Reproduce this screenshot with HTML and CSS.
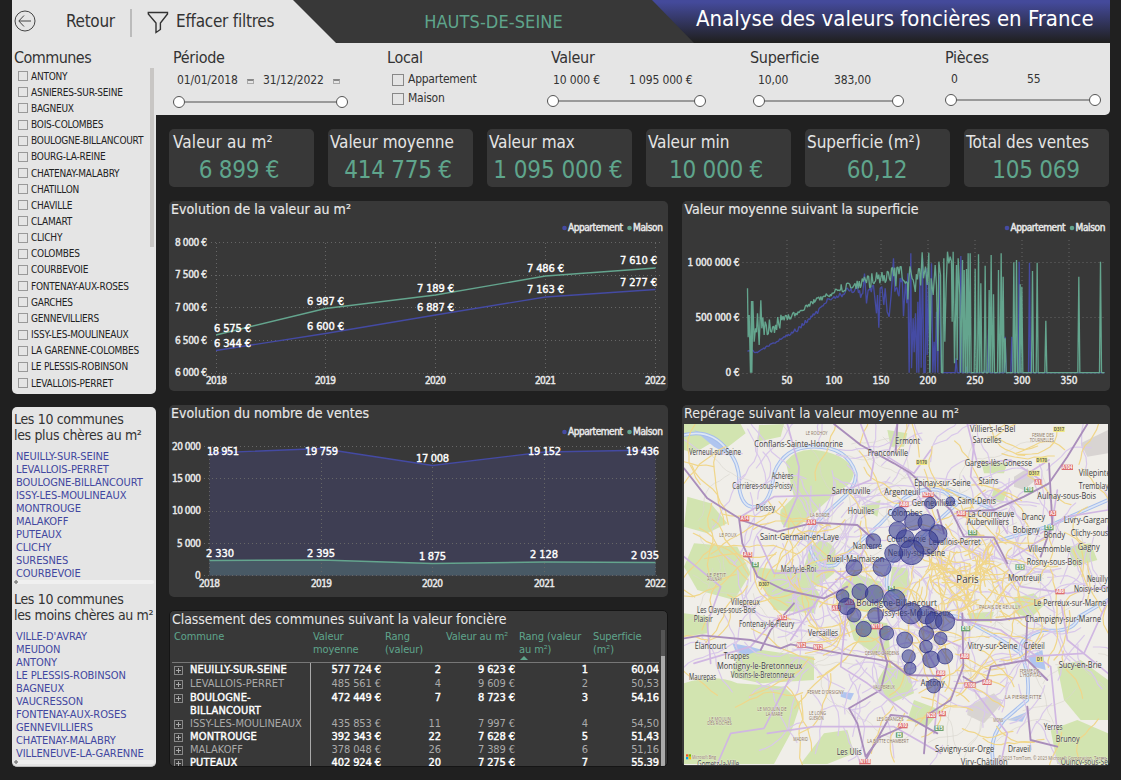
FILE: index.html
```html
<!DOCTYPE html>
<html lang="fr">
<head>
<meta charset="utf-8">
<title>Analyse des valeurs foncières en France</title>
<link rel="stylesheet" href="styles.css">
</head>
<body>
<header class="top">
  <div class="tools">
    <svg class="back" viewBox="0 0 22 22"><circle cx="11" cy="11" r="10"/><path d="M5 11H17M10 5.5L4.8 11L10 16.5"/></svg>
    <span class="back-label">Retour</span>
    <i class="divider"></i>
    <svg class="funnel" viewBox="0 0 22 23"><path d="M1.3 1.5H20.5V3L13.4 12V18.500L9 21.500V12L1.300 3Z"/></svg>
    <span class="clear-label">Effacer filtres</span>
  </div>
  <div class="dept"><span>HAUTS-DE-SEINE</span></div>
  <h1><span>Analyse des valeurs foncières en France</span></h1>
</header>
<div class="body">
  <aside>
    <section class="communes">
      <h2>Communes</h2>
      <div class="scroller">
      <ul>
        <li>ANTONY</li><li>ASNIERES-SUR-SEINE</li><li>BAGNEUX</li><li>BOIS-COLOMBES</li><li>BOULOGNE-BILLANCOURT</li><li>BOURG-LA-REINE</li><li>CHATENAY-MALABRY</li><li>CHATILLON</li><li>CHAVILLE</li><li>CLAMART</li><li>CLICHY</li><li>COLOMBES</li><li>COURBEVOIE</li><li>FONTENAY-AUX-ROSES</li><li>GARCHES</li><li>GENNEVILLIERS</li><li>ISSY-LES-MOULINEAUX</li><li>LA GARENNE-COLOMBES</li><li>LE PLESSIS-ROBINSON</li><li>LEVALLOIS-PERRET</li>
      </ul>
      <i class="thumb"></i>
      </div>
    </section>
    <section class="tops">
      <h2>Les 10 communes<br>les plus chères au m²</h2>
      <ul><li>NEUILLY-SUR-SEINE</li><li>LEVALLOIS-PERRET</li><li>BOULOGNE-BILLANCOURT</li><li>ISSY-LES-MOULINEAUX</li><li>MONTROUGE</li><li>MALAKOFF</li><li>PUTEAUX</li><li>CLICHY</li><li>SURESNES</li><li>COURBEVOIE</li></ul>
      <div class="hbar"></div>
      <h2>Les 10 communes<br>les moins chères au m²</h2>
      <ul><li>VILLE-D'AVRAY</li><li>MEUDON</li><li>ANTONY</li><li>LE PLESSIS-ROBINSON</li><li>BAGNEUX</li><li>VAUCRESSON</li><li>FONTENAY-AUX-ROSES</li><li>GENNEVILLIERS</li><li>CHATENAY-MALABRY</li><li>VILLENEUVE-LA-GARENNE</li></ul>
      <div class="hbar"></div>
    </section>
  </aside>
  <main>
    <section class="filters">
      <div class="filter periode"><h3>Période</h3>
        <div class="vals"><span>01/01/2018</span><i class="cal"></i><span>31/12/2022</span><i class="cal"></i></div>
        <div class="slider"><b></b><b></b></div></div>
      <div class="filter local"><h3>Local</h3><label>Appartement</label><label>Maison</label></div>
      <div class="filter valeur"><h3>Valeur</h3><div class="vals"><span>10 000 €</span><span>1 095 000 €</span></div><div class="slider"><b></b><b></b></div></div>
      <div class="filter surface"><h3>Superficie</h3><div class="vals"><span>10,00</span><span>383,00</span></div><div class="slider"><b></b><b></b></div></div>
      <div class="filter pieces"><h3>Pièces</h3><div class="vals"><span>0</span><span>55</span></div><div class="slider"><b></b><b></b></div></div>
    </section>
    <section class="kpis">
      <div><h3>Valeur au m²</h3><p>6 899 €</p></div>
      <div><h3>Valeur moyenne</h3><p>414 775 €</p></div>
      <div><h3>Valeur max</h3><p>1 095 000 €</p></div>
      <div><h3>Valeur min</h3><p>10 000 €</p></div>
      <div><h3>Superficie (m²)</h3><p>60,12</p></div>
      <div><h3>Total des ventes</h3><p>105 069</p></div>
    </section>
    <section class="panels">
      <div class="col">
        <svg class="card chart" width="499" height="190" viewBox="169 201 499 190">
          <text class="ttl" x="171" y="214" textLength="180">Evolution de la valeur au m²</text>
          <circle class="fa" cx="564.500" cy="228" r="2.300"/><text class="leg" x="568" y="231.300" textLength="55">Appartement</text>
          <circle class="fm" cx="629.500" cy="228" r="2.300"/><text class="leg" x="633" y="231.300" textLength="30">Maison</text>
          <path class="grid" d="M211 242.500H660M211 275.500H660M211 307.500H660M211 340.500H660M211 373.500H660M216.500 243V373M325.500 243V373M435.500 243V373M545.500 243V373M655.500 243V373"/>
          <text class="ax" x="175" y="246" textLength="32">8 000 €</text><text class="ax" x="175" y="278" textLength="32">7 500 €</text><text class="ax" x="175" y="311" textLength="32">7 000 €</text><text class="ax" x="175" y="344" textLength="32">6 500 €</text><text class="ax" x="175" y="376" textLength="32">6 000 €</text>
          <text class="ax" x="206" y="384" textLength="21">2018</text><text class="ax" x="315" y="384" textLength="21">2019</text><text class="ax" x="425" y="384" textLength="21">2020</text><text class="ax" x="535" y="384" textLength="21">2021</text><text class="ax" x="645" y="384" textLength="21">2022</text>
          <path class="la" d="M216 350.500L325.500 333.500L435.500 315L545.500 297L655.500 289.500"/>
          <path class="lm" d="M216 335L325.500 308.500L435.500 295L545.500 276L655.500 268"/>
          <text class="dl" x="214" y="332" textLength="37">6 575 €</text><text class="dl" x="307" y="305" textLength="37">6 987 €</text><text class="dl" x="417" y="292" textLength="37">7 189 €</text><text class="dl" x="527" y="272" textLength="37">7 486 €</text><text class="dl" x="620" y="264" textLength="37">7 610 €</text>
          <text class="dl" x="214" y="347" textLength="37">6 344 €</text><text class="dl" x="307" y="330" textLength="37">6 600 €</text><text class="dl" x="417" y="311" textLength="37">6 887 €</text><text class="dl" x="527" y="293" textLength="37">7 163 €</text><text class="dl" x="620" y="286" textLength="37">7 277 €</text>
        </svg>
        <svg class="card chart" width="499" height="192" viewBox="169 405 499 192">
          <text class="ttl" x="171" y="418" textLength="198">Evolution du nombre de ventes</text>
          <circle class="fa" cx="564.500" cy="432" r="2.300"/><text class="leg" x="568" y="435.300" textLength="55">Appartement</text>
          <circle class="fm" cx="629.500" cy="432" r="2.300"/><text class="leg" x="633" y="435.300" textLength="30">Maison</text>
          <path class="aa" d="M209.500 453L321.500 448.500L432.500 465.500L544.500 452L655.500 450V575.500H209.500Z"/>
          <path class="am" d="M209.500 560.500L321.500 560L432.500 563.500L544.500 562L655.500 562.500V575.500H209.500Z"/>
          <path class="grid" d="M204 446.500H659M204 478.500H659M204 511.500H659M204 543.500H659M204 575.500H659M209.500 447V575M321.500 447V575M432.500 447V575M544.500 447V575M655.500 447V575"/>
          <text class="ax" x="172" y="450" textLength="29">20 000</text><text class="ax" x="172" y="482" textLength="29">15 000</text><text class="ax" x="172" y="514" textLength="29">10 000</text><text class="ax" x="177" y="547" textLength="24">5 000</text><text class="ax" x="195" y="579">0</text>
          <text class="ax" x="199" y="587" textLength="21">2018</text><text class="ax" x="311" y="587" textLength="21">2019</text><text class="ax" x="422" y="587" textLength="21">2020</text><text class="ax" x="534" y="587" textLength="21">2021</text><text class="ax" x="645" y="587" textLength="21">2022</text>
          <path class="la" d="M209.500 453L321.500 448.500L432.500 465.500L544.500 452L655.500 450"/>
          <path class="lm" d="M209.500 560.500L321.500 560L432.500 563.500L544.500 562L655.500 562.500"/>
          <text class="dl" x="207" y="455" textLength="32">18 951</text><text class="dl" x="305" y="455" textLength="33">19 759</text><text class="dl" x="416" y="462" textLength="33">17 008</text><text class="dl" x="528" y="455" textLength="33">19 152</text><text class="dl" x="626" y="455" textLength="33">19 436</text>
          <text class="dl" x="206" y="557" textLength="28">2 330</text><text class="dl" x="307" y="557" textLength="28">2 395</text><text class="dl" x="419" y="560" textLength="27">1 875</text><text class="dl" x="530" y="558" textLength="28">2 128</text><text class="dl" x="631" y="559" textLength="28">2 035</text>
        </svg>
        <div class="card ranking">
          <h3>Classement des communes suivant la valeur foncière</h3>
          <div class="thead"><span>Commune</span><span>Valeur<br>moyenne</span><span>Rang<br>(valeur)</span><span>Valeur au m²</span><span class="sorted">Rang (valeur<br>au m²)</span><span>Superficie<br>(m²)</span></div>
          <div class="rows">
            <div class="row strong"><span><i></i>NEUILLY-SUR-SEINE</span><span>577 724 €</span><span>2</span><span>9 623 €</span><span>1</span><span>60,04</span></div>
            <div class="row"><span><i></i>LEVALLOIS-PERRET</span><span>485 561 €</span><span>4</span><span>9 609 €</span><span>2</span><span>50,53</span></div>
            <div class="row strong tall"><span><i></i>BOULOGNE-<br>BILLANCOURT</span><span>472 449 €</span><span>7</span><span>8 723 €</span><span>3</span><span>54,16</span></div>
            <div class="row"><span><i></i>ISSY-LES-MOULINEAUX</span><span>435 853 €</span><span>11</span><span>7 997 €</span><span>4</span><span>54,50</span></div>
            <div class="row strong"><span><i></i>MONTROUGE</span><span>392 343 €</span><span>22</span><span>7 628 €</span><span>5</span><span>51,43</span></div>
            <div class="row"><span><i></i>MALAKOFF</span><span>378 048 €</span><span>26</span><span>7 389 €</span><span>6</span><span>51,16</span></div>
            <div class="row strong"><span><i></i>PUTEAUX</span><span>402 924 €</span><span>20</span><span>7 275 €</span><span>7</span><span>55,39</span></div>
          </div>
          <div class="vscroll"></div>
        </div>
      </div>
      <div class="col">
        <svg class="card chart" width="428" height="190" viewBox="681.500 201 428 190">
          <text class="ttl" x="684" y="214" textLength="234">Valeur moyenne suivant la superficie</text>
          <circle class="fa" cx="1006.500" cy="228" r="2.300"/><text class="leg" x="1010" y="231.300" textLength="55">Appartement</text>
          <circle class="fm" cx="1071.500" cy="228" r="2.300"/><text class="leg" x="1075" y="231.300" textLength="30">Maison</text>
          <path class="grid" d="M742 262.500H1105M742 317.500H1105M742 373.500H1105M786.500 240V373M833.500 240V373M880.500 240V373M927.500 240V373M974.500 240V373M1021.500 240V373M1068.500 240V373"/>
          <text class="ax" x="687" y="266" textLength="52">1 000 000 €</text><text class="ax" x="695" y="321" textLength="44">500 000 €</text><text class="ax" x="725" y="376" textLength="14">0 €</text>
          <text class="ax" x="781" y="384" textLength="11">50</text><text class="ax" x="825" y="384" textLength="17">100</text><text class="ax" x="872" y="384" textLength="17">150</text><text class="ax" x="919" y="384" textLength="17">200</text><text class="ax" x="966" y="384" textLength="17">250</text><text class="ax" x="1013" y="384" textLength="17">300</text><text class="ax" x="1060" y="384" textLength="17">350</text>
          <g transform="translate(674 195) scale(.33333)"><polyline id="app" class="sa"/><polyline id="mai" class="sm"/></g>
        </svg>
        <div class="card mapcard">
          <h3>Repérage suivant la valeur moyenne au m²</h3>
          <svg class="map" width="424" height="341" viewBox="684 424 424 341"><g id="map" transform="translate(674 400) scale(.33333)"></g></svg>
        </div>
      </div>
    </section>
  </main>
</div>
<script src="script.js"></script>
</body>
</html>
```
FILE: styles.css
```css
*,*::before{box-sizing:border-box;margin:0;padding:0}
body{width:1121px;height:780px;overflow:hidden;background:#202020;padding-left:12px;font-family:"DejaVu Sans Condensed","DejaVu Sans",sans-serif;font-stretch:condensed;color:#333;font-size:11px}
h1,h2,h3{font-weight:400}
ul{list-style:none}
.top{display:flex;width:1098px;height:43px;background:linear-gradient(#444a9b 5%,#202020 98%)}
.tools{width:324px;background:#e5e5e5;clip-path:polygon(0 0,281px 0,100% 100%,0 100%);display:flex;align-items:center;font-size:17px;position:relative;z-index:1;white-space:nowrap}
.back{width:22px;height:22px;margin-left:2px;margin-bottom:2px;fill:none;stroke:#444;stroke-width:1}
.back-label{margin-left:30px;width:64px;margin-bottom:2px;letter-spacing:-.3px}
.divider{width:2px;height:28px;background:#bbb;margin-top:3px}
.funnel{width:22px;height:23px;margin-left:15px;margin-top:2px;fill:none;stroke:#333;stroke-width:1.4}
.clear-label{margin-left:7px;margin-bottom:2px;letter-spacing:-.25px}
.dept{margin-left:-43px;width:401px;background:#383838;clip-path:polygon(0 0,359px 0,100% 100%,0 100%);display:flex;align-items:center;justify-content:center;color:#5fa58c;font-size:18px;letter-spacing:.1px}
.top h1{flex:1;color:#fff;font-size:22px;letter-spacing:0;white-space:nowrap;padding:6px 0 0 2px}
.body{display:flex}
aside{width:144px}
.communes{height:351px;background:#e5e5e5;border-radius:0 0 5px 5px;padding:6px 2px 0;margin-bottom:13px}
.communes h2{font-size:16px;line-height:18px;letter-spacing:-.55px}
.scroller{display:flex;justify-content:space-between;padding-top:1px}
.communes ul{font-size:10px;letter-spacing:-.22px;color:#222;white-space:nowrap}
.communes li{height:16.16px;line-height:17px;display:flex;align-items:center;padding-left:4px}
.communes li::before{content:"";width:10px;height:10px;border:1px solid #999;margin-right:3px;flex:none}
.thumb{width:4px;height:179px;background:#c8c6c4;flex:none}
.tops{height:360px;background:#e5e5e5;border-radius:5px;padding:4px 2px 0;border-bottom:1px solid #bbb}
.tops h2{font-size:14px;line-height:16px;letter-spacing:-.34px;white-space:nowrap}
.tops ul{padding:7px 0 0 2px;color:#4247a0;font-size:11px;letter-spacing:-.08px;white-space:nowrap}
.tops li{height:13px;line-height:13px}
.hbar{height:4px;background:radial-gradient(circle at 2px 2px,#888 1.5px,#f0f0f0 2px);margin:0 0 7px;border-radius:2px}
main{width:954px}
.filters{height:72px;background:#e5e5e5;border-radius:0 0 5px 0;padding:6px 0 0 17px;display:grid;grid-template-columns:214px 164px 199px 195px 165px;color:#333}
.filter h3{font-size:16px;line-height:18px;height:23px;letter-spacing:-.3px}
.vals{display:flex;height:16px;line-height:16px;font-size:12px;letter-spacing:-.15px;align-items:center;white-space:nowrap}
.periode .vals{padding-left:4px}
.periode .vals span{width:70px}
.cal{width:7px;height:5px;border:1px solid #aaa;border-top:2px solid #888;margin:2px 9px 0 0}
.local label{display:flex;align-items:center;height:19px;padding-left:5px;font-size:12px;letter-spacing:-.25px;line-height:17px;margin-top:-2px;margin-bottom:2px}
.local label::before{content:"";width:12px;height:12px;border:1px solid #888;margin-right:4px}
.valeur .vals{padding-left:2px}.valeur .vals span:first-child,.surface .vals span:first-child,.pieces .vals span:first-child{width:76px}
.surface .vals{padding-left:8px}.pieces .vals{padding-left:6px;margin-top:-1px}
.slider{display:flex;justify-content:space-between;align-items:center;height:12px;margin-top:7px;background:linear-gradient(#999,#999) 0 50%/100% 2px no-repeat}
.slider b{width:12px;height:12px;border:1px solid #555;border-radius:50%;background:#fff}
.periode .slider{width:175px;margin-top:8px}
.valeur .slider{width:159px;margin-left:-4px}
.surface .slider{width:151px;margin-left:3px}
.pieces .slider{width:156px}
.kpis{display:grid;grid-template-columns:repeat(6,145px);justify-content:space-between;margin:14px 1px 14px 13px}
.kpis div{height:58px;background:#383838;border-radius:5px;padding:4px 2px}
.kpis h3{color:#e5e5e5;font-size:17px;line-height:19px;letter-spacing:-.05px;white-space:nowrap}
.kpis div:first-child h3{padding-left:2px;letter-spacing:.15px}
.kpis p{text-align:center;color:#5fa58c;font-size:24px;line-height:30px;letter-spacing:-.25px;margin-top:3px;padding-right:5px;white-space:nowrap}
.kpis div:nth-child(3) p{letter-spacing:-.1px;padding-right:3px}
.kpis div:nth-child(n+5) p{padding-right:1px}
.panels{display:flex;gap:13.500px;margin-left:13px}
.col{display:flex;flex-direction:column;gap:14px}
.card{background:#383838;border-radius:5px;display:block}
.chart text{fill:#e8e8e8;font-size:11px}
.chart .ttl{font-size:14px;stroke:#e8e8e8;stroke-width:.15}
.chart .leg,.chart .ax{font-size:10px;stroke:#e8e8e8;stroke-width:.45}
.chart .dl{fill:#fff;stroke:#fff;stroke-width:.4}
.grid{stroke:#666;stroke-dasharray:1 3;fill:none}
.fa{fill:#454ba3}.fm{fill:#64a58e}
.la,.lm{fill:none;stroke:#444aa3;stroke-width:1.4}.lm{stroke:#64a58e}
.aa{fill:#3e3e53}.am{fill:#485965}
.sa,.sm{fill:none;stroke:#454ba3;stroke-width:4;stroke-linejoin:bevel}.sm{stroke:#64a58e}
.ranking{position:relative;width:499px;height:157px;margin-top:-1px;border:1px solid #151515;padding:1px 0 0 2px;overflow:hidden;color:#aaa}
.ranking h3{font-size:14px;line-height:16px;margin-top:-1px;margin-bottom:1px;color:#e8e8e8;letter-spacing:-.06px;white-space:nowrap}
.thead{display:grid;grid-template-columns:139px 72px 61px 73px 74px 66px;color:#5fa58c;font-size:11px;line-height:13px;height:34px;padding:2px 0 0 2px;letter-spacing:-.1px;white-space:nowrap}
.sorted{position:relative}
.sorted::after{content:"";position:absolute;left:1px;top:26px;border:4px solid transparent;border-top:0;border-bottom:4px solid #5fa58c}
.rows{width:487px;border-top:1px solid #777;background:linear-gradient(#aaa,#aaa) 138px 0/1px 100% no-repeat}
.row{display:grid;grid-template-columns:138px 71px 60px 74px 73px 71px;height:13px;line-height:13px;text-align:right;letter-spacing:-.1px;white-space:nowrap}
.row:nth-child(-n+2){height:14px}.row.tall{height:26px}
.row span:first-child{text-align:left;padding-left:18px;position:relative;letter-spacing:0}
.row.strong span:first-child{letter-spacing:.15px}
.row i{position:absolute;left:2px;top:3px;width:9px;height:9px;border:1px solid #888;background:linear-gradient(#aaa,#aaa) 50% 50%/5px 1px no-repeat,linear-gradient(#aaa,#aaa) 50% 50%/1px 5px no-repeat}
.row.strong{color:#fff;-webkit-text-stroke:.4px #fff}
.vscroll{position:absolute;right:2px;top:19px;width:4px;height:136px;background:linear-gradient(#555 26px,#aaa 26px)}
.mapcard{width:428px;height:361px;padding-left:2.500px}
.mapcard h3{color:#e8e8e8;font-size:14px;line-height:16px;height:19px;letter-spacing:.05px}
.map{display:block;background:#f0eee9;font-family:"Open Sans","Noto Sans",sans-serif;font-stretch:normal}
.map path{fill:none;stroke-linecap:round;stroke-linejoin:round}
.map .wood{fill:#d2e4b0}.map .lake{fill:#b0c5ef}.map .airport{fill:#d8d4d2}
.map .river{stroke:#a6beec;stroke-width:11}.map .rivercore{stroke:#dde7f5;stroke-width:5}
.map .hwy{stroke:#a98dbb;stroke-width:5.5}.map .road{stroke:#d0b7e2;stroke-width:5}.map .street{stroke:#f0d68a;stroke-width:3.6}.map .lane{stroke:#d9c8ea;stroke-width:3.5}.map .path{stroke:#d9d6cf;stroke-width:2}
.map text{fill:#3c3c3c;stroke:#f2f0ec;stroke-width:1.5;paint-order:stroke;font-size:25px}
.map .place{fill:#8a7460;font-size:15px;stroke-width:1}
.map .badge{fill:#fff;stroke:none;font-size:13px;font-weight:bold}
.map .bubble{fill:#363d93;fill-opacity:.58;stroke:#282b83;stroke-width:2}
```
FILE: script.js
```js
const NS = 'http://www.w3.org/2000/svg';
let seed = 17;
const rnd = () => (seed = (seed * 16807) % 2147483647) / 2147483647;

// Walks along [x, y, amplitude] anchors, adding noise every step.
function noisy(anchors, step) {
  const out = [];
  for (let i = 0; i < anchors.length - 1; i++) {
    const [x0, y0, a0] = anchors[i], [x1, y1, a1] = anchors[i + 1];
    for (let x = x0; x < x1; x += step) {
      const t = (x - x0) / (x1 - x0);
      out.push([x, y0 + (y1 - y0) * t + (rnd() * 2 - 1) * (a0 + (a1 - a0) * t)]);
    }
  }
  return out;
}
const plot = (id, pts) => document.getElementById(id).setAttribute('points', pts.map(p => p[0].toFixed(1) + ',' + Math.min(533, p[1]).toFixed(1)).join(' '));
const peaks = list => list.flatMap(([x, y, w = 3]) => [[x - w, 533], [x, y], [x + w, 533]]);

plot('mai', [[219,280],[221,427],[224,360],[228,533],[231,318],[232,533],[235,318],[239,440],[243,400],[246,412],[249,355],[254,450],[259,316],[262,400],[265,368],[269,420],
  ...noisy([[272,405,25],[300,390,30],[345,367,9],[380,345,7],[420,320,9],[470,298,9],[500,280,12],[560,265,14],[600,255,26],[680,243,34],[700,265,50],[740,235,45]], 3.2),
  [743,172],[747,250],[753,215],[758,270],[763,173],[766,533],[770,250],[776,300],[782,210],[786,270],[790,468],[793,200],[798,240],[801,533],[805,533],[808,190],[811,440],[815,270],[819,170],[823,205],[827,185],[831,200],[833,380],[836,170],[840,505],[846,210],[848,495],[851,190],[856,300],[858,533],[864,195],
  ...peaks([[869,225],[876,222],[881,175],[887,175],[902,222],[912,178],[919,265],[932,212],[944,285],[950,180],[957,298],[972,225],[980,175],[986,245],[992,430],[1018,202],[1026,195],[1037,268],[1042,275],[1074,228],[1088,203],[1114,377],[1213,245],[1278,200]]), [1290,533]]);
plot('app', [...noisy([[219,470,3],[232,467,3],[245,474,3],[290,448,3],[345,418,4],[370,402,8],[400,375,6],[430,350,6],[460,315,7],[480,305,6],[520,290,12],[566,290,20]], 3.2),
  [570,236],[576,325],[581,285],...noisy([[584,280,20],[600,295,30]],3.2),[606,355],[609,300],[613,398],[617,280],[622,275],[628,330],[632,280],[638,350],[644,365],[650,300],[654,240],[657,190],[661,290],...noisy([[664,270,40],[685,280,50]],3.2),[687,364],[693,260],[697,325],[700,235],[704,533],[709,175],[711,520],[716,370],[719,472],[723,355],[727,533],[730,320],[733,533],[736,240],[740,518],[744,190],[748,533],[752,533],[755,220],[758,480],[762,260],[766,533],[771,205],[775,533],[779,440],[782,533],[786,350],[790,533],[794,240],[801,533],
  ...peaks([[845,490],[859,183],[875,515],[930,525],[942,405],[992,425],[1012,425],[1034,200],[1065,203]]), [1290,533]]);

const map = document.getElementById('map');
function add(tag, cls, attrs, text) {
  const e = document.createElementNS(NS, tag);
  e.setAttribute('class', cls);
  for (const k in attrs) e.setAttribute(k, attrs[k]);
  if (text) e.textContent = text;
  map.append(e);
}
const path = (cls, ...ds) => ds.forEach(d => add('path', cls, { d }));

path('wood',
  'M335 185Q370 140 440 152Q520 165 540 215Q535 260 490 270Q465 300 430 330Q400 360 365 385Q310 390 320 330L360 290Z',
  'M30 72H200L215 100L150 150L110 130L60 160L30 150Z','M255 75L330 72L320 110L250 125Z','M410 440Q450 400 485 450L480 520L430 560L380 530Z',
  'M40 290L110 310L160 370L100 400L30 380Z','M60 430L190 440L230 520L180 600L70 570L30 500Z','M540 520L620 545L640 600L590 640L500 620L500 560Z',
  'M655 500L700 505L710 560L680 610L645 570Z','M1020 595L1080 580L1110 615L1070 655L1025 640Z','M520 650L640 670L650 770L600 760L540 720Z',
  'M240 500L400 520L440 590L420 640L300 630Z','M30 850Q120 820 190 850L330 860L380 910L350 1000L300 1092H30Z','M200 740L330 760L420 770L420 840L260 850L170 830Z',
  'M640 790L710 830L720 880L650 910L600 860Z','M450 1000L520 990L540 1060L460 1092H380Z','M1150 800L1220 780L1302 840V960L1220 960L1170 900Z',
  'M1180 440L1250 430L1270 480L1200 500Z','M1130 990L1210 960L1302 1000V1092H1150Z','M920 180L1000 190L990 220L930 220Z','M560 320L620 300L610 350Z','M960 265L1000 275L985 310L950 300Z','M30 640L110 650L100 700L30 710Z','M640 90L700 100L690 140L650 140Z','M880 640L960 635L950 665L890 665Z','M720 900L800 930L760 980L700 960Z');
path('airport','M1020 230L1060 205L1085 240L1050 270L1020 260Z','M880 920L960 880L985 910L930 970L880 945Z','M1220 130L1302 90V160L1240 170Z');
path('lake','M175 730L230 740L265 750L215 765L185 755Z','M60 90L130 115L165 165L120 140Z','M500 875L540 880L530 900L500 890Z','M1060 770L1105 750L1115 810L1080 800Z','M1000 960L1060 935L1045 965Z');
const seine = ['M30 105Q110 85 160 150Q200 190 195 260Q205 330 250 320Q290 310 300 220Q330 140 420 140Q520 140 545 220Q550 260 500 300L440 355Q395 400 410 450Q430 510 485 495L530 450L620 370L690 295Q750 255 810 275L850 310L795 360L730 430L660 480Q630 520 640 570L690 610L760 640L850 650Q960 700 1040 760Q1070 820 1060 900L990 960Q940 1020 960 1092','M1040 760Q1030 710 1110 690Q1200 700 1215 650L1302 600','M820 270L870 290L960 330','M1302 300L1120 380L980 420'];
path('river', ...seine); path('rivercore', ...seine);

// Secondary streets: short wandering lines, denser toward the city centre.
function wander(cls, n, cx, cy, sx, sy, len, step) {
  for (let i = 0; i < n; i++) {
    let x = cx + (rnd() + rnd() - 1) * sx, y = cy + (rnd() + rnd() - 1) * sy, a = rnd() * 6.283, d = `M${x | 0} ${y | 0}`;
    for (let k = 0; k < len; k++) { a += (rnd() - .5) * .9; x += Math.cos(a) * step; y += Math.sin(a) * step; d += `L${x | 0} ${y | 0}`; }
    path(cls, d);
  }
}
wander('path', 90, 660, 560, 640, 560, 10, 18);
wander('lane', 190, 820, 560, 560, 560, 8, 20);
wander('lane', 60, 350, 560, 340, 560, 8, 24);
wander('street', 120, 900, 560, 480, 600, 8, 20);
wander('street', 50, 300, 560, 330, 560, 9, 24);
wander('street', 75, 880, 540, 140, 120, 5, 13);

path('road','M340 72L375 200L370 290L330 380','M200 350L300 290L480 285L590 240L600 180L560 72','M670 72L640 170L720 220L770 150','M880 72L910 190L1010 180L1100 240','M950 300L1030 240L1125 180','M590 400L560 470L430 600L350 720','M250 410L300 520L480 510L560 570','M700 220L740 300L800 390','M1000 400L940 300L890 230L900 130','M1100 400L1180 350L1302 330','M950 420L1040 560L1180 580L1302 560','M1020 470L1130 400L1150 270','M30 470L140 560L100 670L110 790','M280 1000L420 980L560 980L660 980L800 1060','M740 720L800 830L780 1000','M900 870L1000 1000L980 1092','M860 660L980 690L1130 800L1150 1000','M420 620L300 660L230 740L60 790','M620 560L730 680L860 740','M1160 600L1180 720L1302 820','M130 1092L170 1000L270 985L350 830');
path('hwy','M480 72L560 135L660 190L710 220L830 330L870 410L960 412L1000 490','M30 205L100 295L195 355L205 430L250 530L330 570L450 595L520 560','M200 360L310 395L420 368L550 375L600 420','M1240 72L1180 170L1125 250L1050 290L960 330L850 335','M1125 190L1135 370L1100 470','M30 715L85 706L230 720L320 745L350 733L500 760L650 785L700 825L800 828','M360 610L290 690L260 750','M610 600L620 720L640 790L620 870L525 925L550 970L575 1070L620 1010L700 975','M865 640L868 800L830 900L760 945L750 1060','M868 830L900 850L930 840','M1055 780L1060 650L980 660L850 660L760 620','M935 850L950 800L1060 780L1120 840','M575 1080L650 945L700 950L790 1000','M1060 920L1070 1020L1150 1040','M670 72L665 160','M790 330L810 400');
path('road','M520 600L500 800L580 850L700 940','M1302 600L1230 760L1060 770');

const labels = `Villiers-le-Bel|888|95|136;Ermont|664|131|74;Sarcelles|896|129|86;Conflans-Sainte-Honorine|241|140|266;Franconville|581|167|121;Garges-lès-Gonesse|872|199|202;Villepinte|1214|227|96;Achères|293|236|65;Épinay-sur-Seine|721|258|169;Stains|914|251|59;Tremblay|1214|267|90;Argenteuil|631|286|108;Sartrouville|473|281|116;Aulnay-sous-Bois|1090|297|176;Poissy|245|333|58;Houilles|521|341|80;Gennevilliers|713|318|132;Saint-Denis|851|311|115;Colombes|641|348|105;La Courneuve|881|350|140;Drancy|1043|360|70;Aubervilliers|878|374|127;Livry-Gargan|1169|370|137;Bobigny|1016|399|81;Bondy|1109|413|64;Clichy-sous|1190|409|113;Saint-Germain-en-Laye|258|421|237;Courbevoie|638|427|118;Levallois-Perret|764|434|156;Nanterre|536|448|88;Gagny|1211|451|66;Villemomble|1062|456|128;Neuilly-sur-Seine|641|467|172;Rueil-Malmaison|458|486|173;Rosny-sous-Bois|1058|494|166;Marly-le-Roi|320|517|106;Montreuil|1002|543|99;Neuilly|1239|547|62;Noisy-le-Grand|1200|575|140;Boulogne-Billancourt|547|617|242;Issy-les-Moulineaux|625|647|205;Villepreux|170|614|87;Les Clayes-sous-Bois|69|640|176;Plaisir|59|667|57;Fontenay-le-Fleury|195|681|166;Versailles|402|709|90;Le Perreux-sur-Marne|1079|617|218;Champigny-sur-Marne|1053|667|228;Élancourt|62|748|96;Trappes|149|778|77;Vitry-sur-Seine|881|747|150;Créteil|1049|747|63;Montigny-le-Bretonneux|129|806|256;Sucy-en-Brie|1154|803|129;Maurepas|45|841|81;Voisins-le-Bretonneux|170|835|192;Antony|740|857|72;Yerres|1109|989|57;Brunoy|1145|1025|72;Draveil|1002|1056|68;Savigny-sur-Orge|783|1057|178;Les Ulis|488|1065|75;Viry-Châtillon|860|1094|141;Quincy-sous-Sénart|1160|1094|180;Gometz-la-Ville|70|1100|125;Carrières-sous-Poissy|175|266|181;Verneuil-sur-Seine|45|164|156`;
for (const row of labels.split(';')) {
  const [t, x, y, w] = row.split('|');
  add('text', '', { x, y, textLength: w, lengthAdjust: 'spacingAndGlyphs' }, t);
}
add('text', '', { x: 847, y: 549, textLength: 67, lengthAdjust: 'spacingAndGlyphs', style: 'font-size:32px' }, 'Paris');
for (const row of 'LE ROCHOY|395|105;FERME DES|1074|110;TOURNELLES|1067|125;LA BORDE|408|351;LE POUX|136|410;LE PETIT|98|531;AULNAY|100|544;DESMEC-GARDENS|573|766;VAUPEREUX|597|867;FERME D\'ORSIGNY|400|883;LE MOULIN DE|250|934;LA MARE|275|947;LE LONG|405|946;GUÉRON|405|959;LE MOULIN|105|963;DES ROCHES|100|976;LES GRANGES|608|964;LA BUTTE CHAMBERT|580|1030;MADRID|358|1022;LA PIERRE FITTE|993|897;MONS|958|967;FERME DE|1037|818;L\'HÔPITAL|1037|832;PALAIS DE REUILLY|915|628'.split(';')) {
  const [t, x, y] = row.split('|');
  add('text', 'place', { x, y, textLength: t.length * 7.3, lengthAdjust: 'spacingAndGlyphs' }, t);
}
const colours = { r: '#dc6d70', g: '#6da270', y: '#f0e880' };
for (const row of 'A14|212|356|r;A14|412|367|r;A13|221|464|r;E5|244|494|g;D307|270|552|y;D170|743|187|y;N370|762|284|r;A86|690|313|r;A86|862|341|r;D317|1155|88|y;D170|1103|180|y;A104|1180|202|r;D317|1080|220|y;A1|1092|246|r;E19|1064|269|g;A3|1136|340|r;E15|1125|383|g;E15|896|398|g;E15|1038|501|g;E5|652|566|g;A86|1158|575|r;A13|487|624|r;A13|526|607|r;N12|325|653|r;N118|609|680|r;E10|875|686|g;N12|382|735|r;N12|432|741|r;A86|872|769|r;D1|1097|778|y;A86|800|820|r;A86|939|847|r;A106|888|855|r;N20|772|946|r;A6|805|941|r;A10|687|977|r;E5|676|1005|g;E15|795|985|g;N118|573|1085|r'.split(';')) {
  const [t, x, y, c] = row.split('|');
  const w = 8 + t.length * 6.5;
  add('rect', '', { x: x - w / 2, y: y - 8, width: w, height: 16, fill: colours[c] });
  add('text', 'badge', { x, y: +y + 5, 'text-anchor': 'middle', style: c === 'y' ? 'fill:#666' : '' }, t);
}
for (const [x, y, r] of [[676,343,22],[769,309,17],[829,304,13],[718,365,26],[757,368,25],[671,391,26],[694,416,27],[792,401,27],[756,426,37],[713,457,37],[659,460,27],[598,423,22],[624,502,27],[540,503,24],[506,588,19],[558,575,24],[601,582,27],[661,601,33],[518,619,25],[540,645,21],[604,646,23],[711,640,32],[757,645,27],[779,662,25],[813,664,29],[569,687,23],[638,699,21],[692,720,24],[757,700,22],[800,715,19],[756,740,19],[704,769,20],[771,778,25],[813,769,23],[708,805,18],[779,858,21]])
  add('circle', 'bubble', { cx: x, cy: y, r });
[['#f25022', 36, 1063], ['#7fba00', 44, 1063], ['#00a4ef', 36, 1071], ['#ffb900', 44, 1071]].forEach(([fill, x, y]) => add('rect', '', { x, y, width: 7, height: 7, fill }));
add('text', 'place', { x: 54, y: 1076, textLength: 72, lengthAdjust: 'spacingAndGlyphs' }, 'Microsoft Bing');
add('text', 'place', { x: 972, y: 1081, textLength: 325, lengthAdjust: 'spacingAndGlyphs' }, '© 2023 TomTom, © 2023 Microsoft Corporation, Terms');
```
